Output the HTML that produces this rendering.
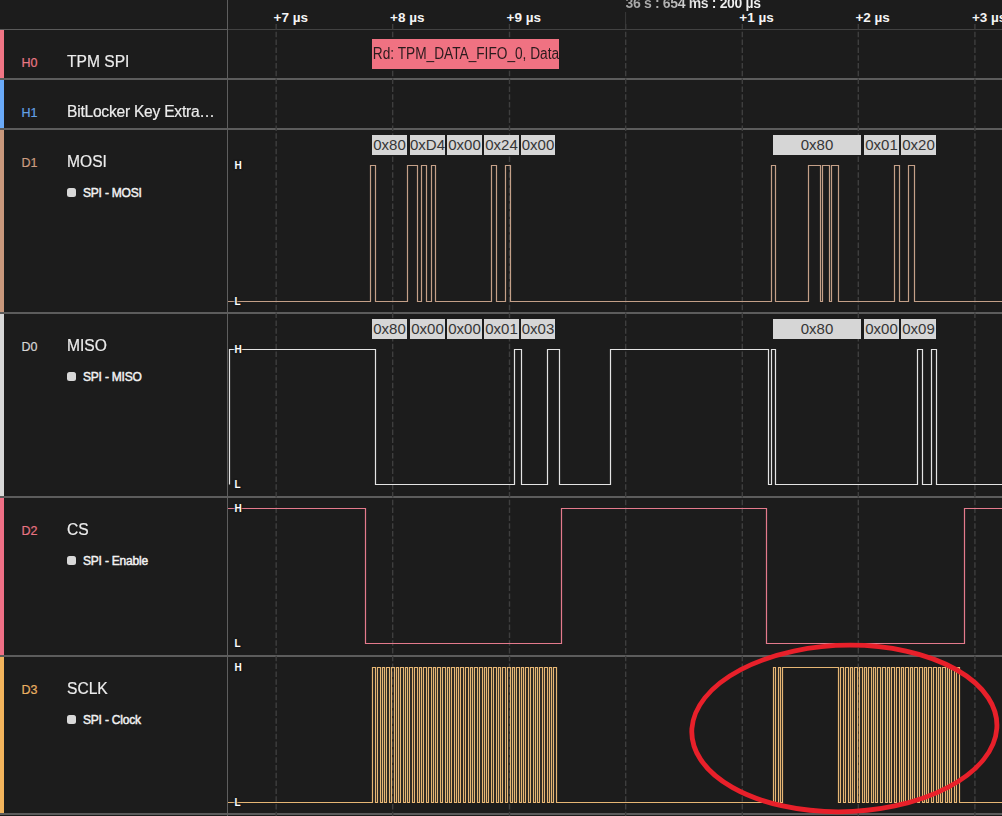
<!DOCTYPE html>
<html><head><meta charset="utf-8">
<style>
html,body{margin:0;padding:0;}
body{width:1002px;height:816px;overflow:hidden;background:#1c1c1c;position:relative;font-family:"Liberation Sans",sans-serif;}
.sep{position:absolute;left:0;width:1002px;background:#5c5c5c;}
.vsep{position:absolute;left:227px;top:0;width:1px;height:816px;background:#5e5e5e;}
.bar{position:absolute;left:0;width:4px;}
.code{position:absolute;left:21.6px;font-size:12.5px;line-height:16px;-webkit-text-stroke:0.2px currentColor;}
.name{position:absolute;left:67px;font-size:16px;line-height:20px;color:#ececec;-webkit-text-stroke:0.2px #ececec;white-space:nowrap;transform:scaleX(0.975);transform-origin:0 0;}
.dot{position:absolute;left:67px;width:9px;height:9px;border-radius:2.5px;background:#d8d8d8;}
.sub{position:absolute;left:83px;font-size:12px;line-height:16px;color:#f2f2f2;-webkit-text-stroke:0.45px #f2f2f2;letter-spacing:-0.2px;white-space:nowrap;}
.hl{position:absolute;left:234.5px;font-size:10px;line-height:13px;font-weight:bold;color:#fff;text-shadow:0 0 1px #1c1c1c,0 0 2px #1c1c1c,0 0 2px #1c1c1c;}
.tick{position:absolute;top:10.2px;font-size:13.5px;line-height:16px;font-weight:bold;color:#f4f4f4;white-space:nowrap;}
.bb{position:absolute;height:20px;background:#d6d6d6;color:#353535;font-size:15px;line-height:20px;text-align:center;overflow:hidden;white-space:nowrap;}
.fifo{position:absolute;left:372px;top:39px;width:187px;height:30px;background:#f07282;color:#2a1b1d;font-size:16px;line-height:30px;overflow:hidden;white-space:nowrap;}
.fifo span{display:inline-block;transform:scaleX(0.855);transform-origin:0 0;padding-left:1px;}
svg{position:absolute;left:0;top:0;}
.ts{background:linear-gradient(90deg,#a6a6a6 0%,#b4b4b4 35%,#e6e6e6 50%,#f4f4f4 100%);-webkit-background-clip:text;background-clip:text;color:transparent;}
</style></head><body>
<div class="sep" style="top:29px;height:1px;background:#424242"></div>
<div class="sep" style="top:29px;height:1px;width:227px;background:#5a5a5a"></div>
<div class="sep" style="top:78px;height:2px"></div>
<div class="sep" style="top:128px;height:2px"></div>
<div class="sep" style="top:312px;height:2px"></div>
<div class="sep" style="top:496px;height:2px"></div>
<div class="sep" style="top:655px;height:2px"></div>
<div class="sep" style="top:813px;height:2px"></div>
<div class="vsep"></div>
<svg width="1002" height="816">
<g stroke="#3e3e3e" stroke-width="1.4" stroke-dasharray="5.5 2.3">
<line x1="276.2" y1="24" x2="276.2" y2="816" />
<line x1="392.7" y1="24" x2="392.7" y2="816" />
<line x1="509.5" y1="24" x2="509.5" y2="816" />
<line x1="625.7" y1="24" x2="625.7" y2="816" />
<line x1="742.3" y1="24" x2="742.3" y2="816" />
<line x1="858.3" y1="24" x2="858.3" y2="816" />
<line x1="974.9" y1="24" x2="974.9" y2="816" />
</g>
</g>
<line x1="625.6" y1="12" x2="625.6" y2="29" stroke="#3a3a3a" stroke-width="1"/>
<g>
<path d="M228,301.5H370.5V165.5H375.5V301.5H407.5V165.5H417.5V301.5H421.5V165.5H426.5V301.5H431.5V165.5H435.5V301.5H491.5V165.5H496.5V301.5H505.5V165.5H510.5V301.5H771.5V165.5H775.5V301.5H808.5V165.5H820.5V301.5H822.5V165.5H829.5V301.5H831.5V165.5H838.5V301.5H894.5V165.5H899.5V301.5H908.5V165.5H914.5V301.5H1002" fill="none" stroke="#c4a088" stroke-width="1.2"/>
<path d="M229.5,484.5V349.5H375.5V484.5H514.5V349.5H521.5V484.5H547.5V349.5H559.5V484.5H610.5V349.5H768.5V484.5H771.5V349.5H775.5V484.5H917.5V349.5H922.5V484.5H931.5V349.5H936.5V484.5H1002" fill="none" stroke="#e4e4e4" stroke-width="1.2"/>
<path d="M228,508.5H365.5V643.5H561.5V508.5H766.5V643.5H964.5V508.5H1002" fill="none" stroke="#e47a8c" stroke-width="1.2"/>
<path d="M228,802.5H372.5V667.5H375.5V802.5H377.5V667.5H380.5V802.5H382.5V667.5H384.5V802.5H386.5V667.5H389.5V802.5H391.5V667.5H394.5V802.5H396.5V667.5H398.5V802.5H400.5V667.5H403.5V802.5H405.5V667.5H407.5V802.5H409.5V667.5H412.5V802.5H414.5V667.5H417.5V802.5H419.5V667.5H421.5V802.5H423.5V667.5H426.5V802.5H428.5V667.5H431.5V802.5H433.5V667.5H435.5V802.5H437.5V667.5H440.5V802.5H442.5V667.5H445.5V802.5H447.5V667.5H449.5V802.5H451.5V667.5H454.5V802.5H456.5V667.5H458.5V802.5H460.5V667.5H463.5V802.5H465.5V667.5H468.5V802.5H470.5V667.5H472.5V802.5H474.5V667.5H477.5V802.5H479.5V667.5H482.5V802.5H484.5V667.5H486.5V802.5H488.5V667.5H491.5V802.5H493.5V667.5H496.5V802.5H498.5V667.5H500.5V802.5H502.5V667.5H505.5V802.5H507.5V667.5H510.5V802.5H512.5V667.5H514.5V802.5H516.5V667.5H519.5V802.5H521.5V667.5H523.5V802.5H525.5V667.5H528.5V802.5H530.5V667.5H533.5V802.5H535.5V667.5H537.5V802.5H539.5V667.5H542.5V802.5H544.5V667.5H547.5V802.5H549.5V667.5H551.5V802.5H553.5V667.5H556.5V802.5H773.5V667.5H775.5V802.5H778.5V667.5H780.5V802.5H782.5V667.5H838.5V802.5H840.5V667.5H843.5V802.5H845.5V667.5H848.5V802.5H850.5V667.5H852.5V802.5H854.5V667.5H857.5V802.5H859.5V667.5H862.5V802.5H864.5V667.5H866.5V802.5H868.5V667.5H871.5V802.5H873.5V667.5H875.5V802.5H877.5V667.5H880.5V802.5H882.5V667.5H885.5V802.5H887.5V667.5H889.5V802.5H891.5V667.5H894.5V802.5H896.5V667.5H899.5V802.5H901.5V667.5H903.5V802.5H905.5V667.5H908.5V802.5H910.5V667.5H912.5V802.5H914.5V667.5H917.5V802.5H919.5V667.5H922.5V802.5H924.5V667.5H926.5V802.5H928.5V667.5H931.5V802.5H933.5V667.5H936.5V802.5H938.5V667.5H940.5V802.5H942.5V667.5H945.5V802.5H947.5V667.5H949.5V802.5H951.5V667.5H954.5V802.5H956.5V667.5H959.5V802.5H1002" fill="none" stroke="#e6b674" stroke-width="1.2"/>
</svg>
<div class="bar" style="top:30px;height:48px;background:#f07585"></div>
<div class="code" style="top:54.5px;color:#ea7884">H0</div>
<div class="name" style="top:51.8px">TPM SPI</div>
<div class="bar" style="top:80px;height:48px;background:#6aaaf8"></div>
<div class="code" style="top:104.5px;color:#62a0e6">H1</div>
<div class="name" style="top:101.8px;letter-spacing:-0.25px">BitLocker Key Extra…</div>
<div class="bar" style="top:130px;height:182px;background:#c8987c"></div>
<div class="code" style="top:154.5px;color:#cc9c80">D1</div>
<div class="name" style="top:151.8px">MOSI</div>
<div class="dot" style="top:188.3px"></div>
<div class="sub" style="top:185px">SPI - MOSI</div>
<div class="bar" style="top:314px;height:182px;background:#d8d8d8"></div>
<div class="code" style="top:338.5px;color:#d6d6d6">D0</div>
<div class="name" style="top:335.8px">MISO</div>
<div class="dot" style="top:372.3px"></div>
<div class="sub" style="top:369px">SPI - MISO</div>
<div class="bar" style="top:498px;height:157px;background:#f07086"></div>
<div class="code" style="top:522.5px;color:#e87482">D2</div>
<div class="name" style="top:519.8px">CS</div>
<div class="dot" style="top:556.3px"></div>
<div class="sub" style="top:553px">SPI - Enable</div>
<div class="bar" style="top:657px;height:156px;background:#f2b45c"></div>
<div class="code" style="top:681.5px;color:#eab062">D3</div>
<div class="name" style="top:678.8px">SCLK</div>
<div class="dot" style="top:715.3px"></div>
<div class="sub" style="top:712px">SPI - Clock</div>
<div class="hl" style="top:159.0px">H</div>
<div class="hl" style="top:295.0px">L</div>
<div class="hl" style="top:343.0px">H</div>
<div class="hl" style="top:478.0px">L</div>
<div class="hl" style="top:502.0px">H</div>
<div class="hl" style="top:637.0px">L</div>
<div class="hl" style="top:661.0px">H</div>
<div class="hl" style="top:796.0px">L</div>
<div class="tick" style="left:273.6px">+7 µs</div>
<div class="tick" style="left:390.0px">+8 µs</div>
<div class="tick" style="left:506.5px">+9 µs</div>
<div class="tick" style="left:739.3px">+1 µs</div>
<div class="tick" style="left:855.4px">+2 µs</div>
<div class="tick" style="left:971.9px">+3 µs</div>
<div class="tick ts" style="left:625.5px;top:-5.4px;font-size:14px;letter-spacing:-0.34px">36 s : 654 ms : 200 µs</div>
<div class="fifo"><span>Rd: TPM_DATA_FIFO_0, Data</span></div>
<div class="bb" style="left:372px;top:135px;width:35px">0x80</div>
<div class="bb" style="left:410px;top:135px;width:35px">0xD4</div>
<div class="bb" style="left:447px;top:135px;width:35px">0x00</div>
<div class="bb" style="left:484px;top:135px;width:35px">0x24</div>
<div class="bb" style="left:521px;top:135px;width:34px">0x00</div>
<div class="bb" style="left:773px;top:135px;width:88px">0x80</div>
<div class="bb" style="left:864px;top:135px;width:35px">0x01</div>
<div class="bb" style="left:901px;top:135px;width:35px">0x20</div>
<div class="bb" style="left:372px;top:319px;width:35px">0x80</div>
<div class="bb" style="left:410px;top:319px;width:35px">0x00</div>
<div class="bb" style="left:447px;top:319px;width:35px">0x00</div>
<div class="bb" style="left:484px;top:319px;width:35px">0x01</div>
<div class="bb" style="left:521px;top:319px;width:34px">0x03</div>
<div class="bb" style="left:773px;top:319px;width:88px">0x80</div>
<div class="bb" style="left:864px;top:319px;width:35px">0x00</div>
<div class="bb" style="left:901px;top:319px;width:35px">0x09</div>
<svg width="1002" height="816" style="pointer-events:none">
<ellipse cx="0" cy="0" rx="152.45" ry="83.3" transform="translate(844.35,728.5) skewX(-4.1)" fill="none" stroke="#e8202a" stroke-width="4.8"/>
</svg>
</body></html>
